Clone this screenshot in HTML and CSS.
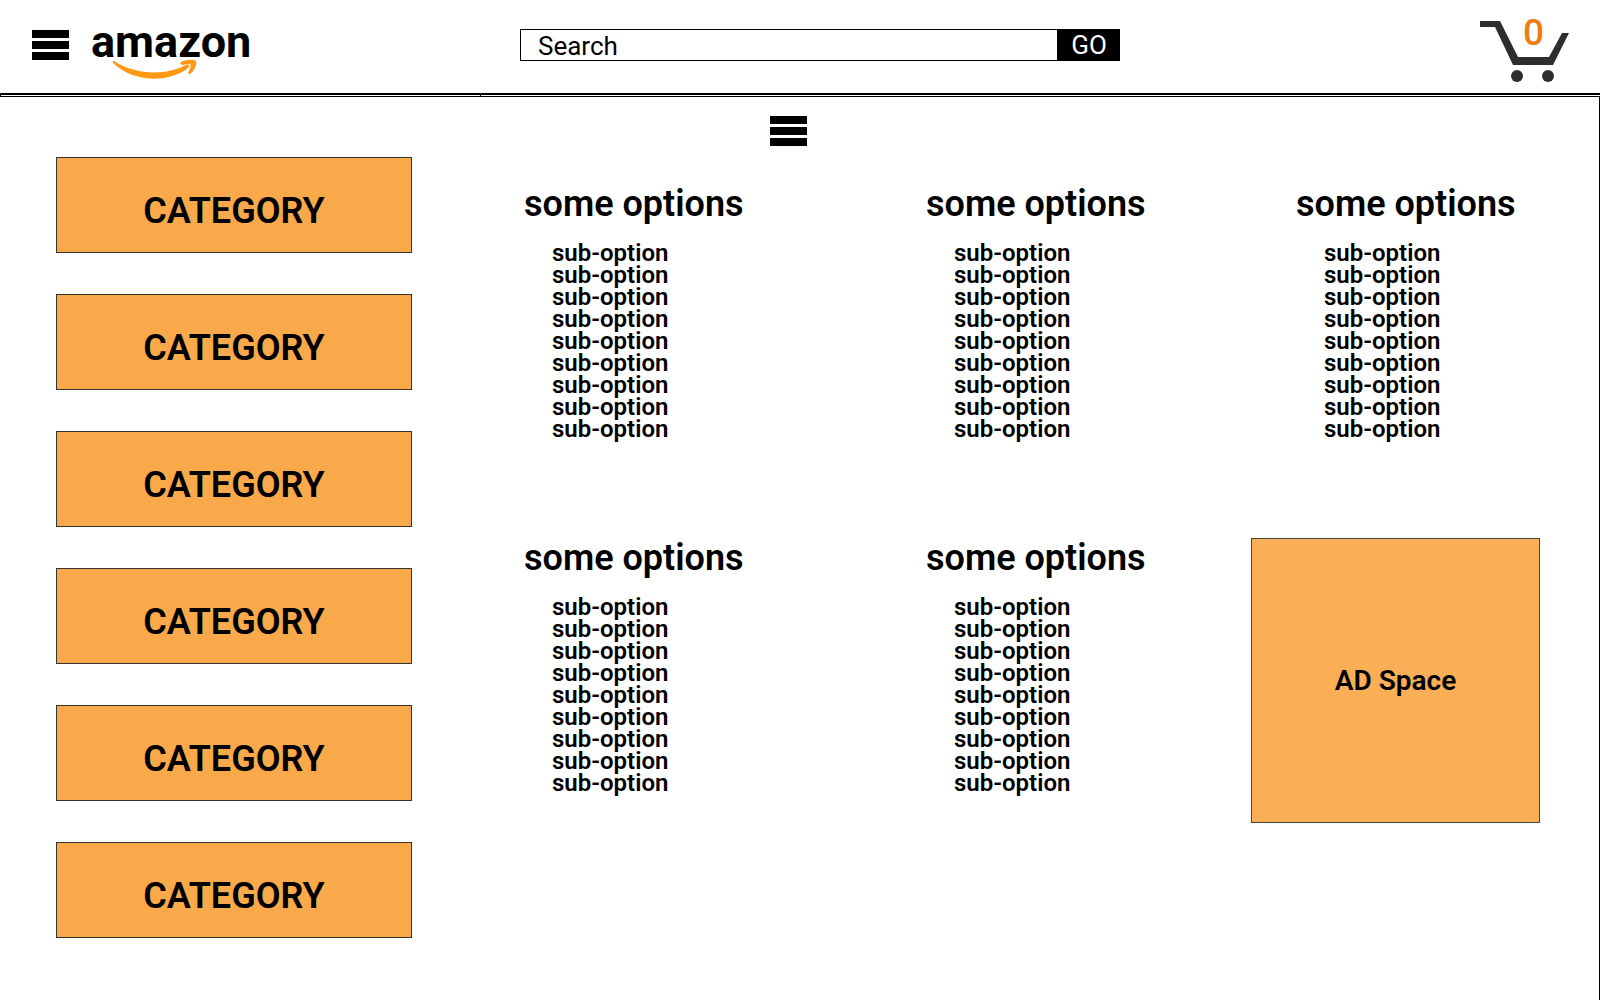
FILE: index.html
```html
<!DOCTYPE html>
<html lang="en">
<head>
<meta charset="utf-8">
<title>amazon</title>
<link rel="stylesheet" href="styles.css">
</head>
<body>
<header class="header">
  <div class="brand">
    <button class="menu" type="button" aria-label="Menu"><span></span><span></span><span></span></button>
    <a class="logo" href="#">amazon
      <svg class="smile" viewBox="0 0 84 20" aria-hidden="true">
        <path d="M1 1 C22 15 52 16 73 5 Q78 4 75 8 C58 22 22 24 0 3 Q-1 0 1 1Z"/>
        <path d="M68 2 C74-1 81-1 83 1 C84 5 81 11 77 14 Q74 14 76 11 C78 7 78 5 77 4 L69 5 Q66 3 68 2Z"/>
      </svg>
    </a>
  </div>
  <form class="search">
    <input class="search-box" type="text" placeholder="Search" aria-label="Search">
    <button class="go" type="button">GO</button>
  </form>
  <a class="cart" href="#" aria-label="Cart">
    <svg viewBox="0 0 90 62" aria-hidden="true">
      <path d="M0 1H20L38 37H69L82 13H89L73 45H33L15 7H0Z"/>
      <circle cx="37" cy="56" r="6"/><circle cx="68" cy="56" r="6"/>
    </svg>
    <span class="count">0</span>
  </a>
</header>
<div class="rule"><div class="rule-cell"></div></div>
<main class="main">
  <nav class="categories" aria-label="Categories">
    <button class="category" type="button">CATEGORY</button>
    <button class="category" type="button">CATEGORY</button>
    <button class="category" type="button">CATEGORY</button>
    <button class="category" type="button">CATEGORY</button>
    <button class="category" type="button">CATEGORY</button>
    <button class="category" type="button">CATEGORY</button>
  </nav>
  <div class="content">
    <button class="menu content-menu" type="button" aria-label="Options menu"><span></span><span></span><span></span></button>
    <div class="groups">
      <section class="group">
        <h2>some options</h2>
        <ul><li>sub-option</li><li>sub-option</li><li>sub-option</li><li>sub-option</li><li>sub-option</li><li>sub-option</li><li>sub-option</li><li>sub-option</li><li>sub-option</li></ul>
      </section>
      <section class="group">
        <h2>some options</h2>
        <ul><li>sub-option</li><li>sub-option</li><li>sub-option</li><li>sub-option</li><li>sub-option</li><li>sub-option</li><li>sub-option</li><li>sub-option</li><li>sub-option</li></ul>
      </section>
      <section class="group group-inset">
        <h2>some options</h2>
        <ul><li>sub-option</li><li>sub-option</li><li>sub-option</li><li>sub-option</li><li>sub-option</li><li>sub-option</li><li>sub-option</li><li>sub-option</li><li>sub-option</li></ul>
      </section>
      <section class="group">
        <h2>some options</h2>
        <ul><li>sub-option</li><li>sub-option</li><li>sub-option</li><li>sub-option</li><li>sub-option</li><li>sub-option</li><li>sub-option</li><li>sub-option</li><li>sub-option</li></ul>
      </section>
      <section class="group">
        <h2>some options</h2>
        <ul><li>sub-option</li><li>sub-option</li><li>sub-option</li><li>sub-option</li><li>sub-option</li><li>sub-option</li><li>sub-option</li><li>sub-option</li><li>sub-option</li></ul>
      </section>
      <aside class="ad">AD Space</aside>
    </div>
  </div>
</main>
</body>
</html>
```
FILE: styles.css
```css
* { box-sizing: border-box; }

body {
  margin: 0;
  min-height: 100vh;
  display: flex;
  flex-direction: column;
  background: #fff;
  color: #000;
  font-family: Roboto, "Liberation Sans", sans-serif;
}

button {
  padding: 0;
  border: 0;
  font-family: inherit;
  color: inherit;
}

/* Header */
.header {
  display: grid;
  grid-template-columns: 488fr 600fr 450fr;
  align-items: center;
  padding: 0 30px 4px 32px;
  min-height: 93px;
}

.brand {
  display: flex;
  align-items: center;
  gap: 22px;
}

.menu {
  display: flex;
  flex-direction: column;
  gap: 3px;
  width: 37px;
  background: none;
}

.menu span {
  width: 100%;
  height: 8px;
  background: #000;
}

.logo {
  position: relative;
  padding-bottom: 6px;
  color: #000;
  text-decoration: none;
  font-size: 45px;
  font-weight: 700;
  line-height: 50px;
}

.smile {
  position: absolute;
  left: 22px;
  top: 43px;
  width: 84px;
  height: 20px;
  fill: #ff9912;
}

.search { display: flex; height: 32px; }

.search-box {
  flex: 1;
  min-width: 0;
  padding: 2px 17px 0;
  border: 1px solid #000;
  border-radius: 0;
  background: #fff;
  font: 400 26px/28px Roboto, sans-serif;
}

.search-box::placeholder { color: #000; opacity: 1; }

.go {
  width: 62px;
  background: #000;
  color: #fff;
  font-size: 26px;
  line-height: 30px;
}

.cart {
  position: relative;
  justify-self: end;
  width: 90px;
  height: 62px;
  margin-top: 12px;
  color: #ee7d10;
  text-decoration: none;
}

.cart svg { display: block; fill: #2e2e2e; }

.count {
  position: absolute;
  left: 43px;
  top: -7px;
  font-size: 37px;
  font-weight: 500;
  line-height: 40px;
}

.rule {
  border: solid #000;
  border-width: 2px 0 1px 1px;
}

.rule-cell {
  width: 30%;
  height: 1px;
  border-right: 1px solid #000;
}

/* Page body */
.main {
  flex: 1;
  display: flex;
  gap: 112px;
  padding: 19px 59px 60px 56px;
  border-right: 1px solid #000;
}

.categories {
  display: flex;
  flex-direction: column;
  gap: 41px;
  width: 356px;
  padding-top: 41px;
}

.category {
  height: 96px;
  padding-top: 12px;
  border: 1px solid #333;
  background: #faa94a;
  font-size: 36px;
  font-weight: 600;
}

.content { flex: 1; }

.content-menu { margin-left: 246px; }

.groups {
  display: grid;
  grid-template-columns: 402fr 325fr 289fr;
  row-gap: 98px;
  margin-top: 38px;
}

.group-inset { padding-left: 45px; }

.group h2 {
  margin: 0 0 18px;
  font-size: 36px;
  font-weight: 600;
  line-height: 40px;
}

.group ul {
  margin: 0;
  padding: 0 0 0 28px;
  list-style: none;
  font-size: 24px;
  font-weight: 600;
  line-height: 22px;
}

.ad {
  display: flex;
  align-items: center;
  justify-content: center;
  height: 285px;
  border: 1px solid #444;
  background: #faaf57;
  font-size: 28px;
  font-weight: 600;
}
```
